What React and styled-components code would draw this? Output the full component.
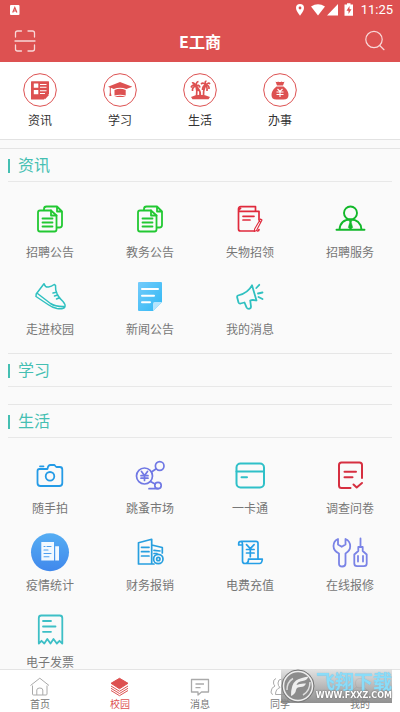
// App.jsx
import { useState } from 'react';
import styled, { createGlobalStyle } from 'styled-components';

const GlobalStyle = createGlobalStyle`
  * {
    box-sizing: border-box;
  }
  body {
    margin: 0;
    background: #fafafa;
    font-family: Roboto, 'Noto Sans CJK SC', sans-serif;
  }
`;

const RED = '#dd5151';

const Screen = styled.div`
  position: relative;
  display: flex;
  flex-direction: column;
  height: 100vh;
`;

const Header = styled.header`
  flex: none;
  background: ${RED};
  color: #fff;
`;

const StatusBar = styled.div`
  display: flex;
  align-items: center;
  height: 20px;
  padding: 0 7px 0 10px;
`;

const StatusIcons = styled.div`
  display: flex;
  align-items: center;
  gap: 3px;
  margin-left: auto;
`;

const Clock = styled.time`
  margin-left: 4px;
  font-size: 13px;
  font-weight: 400;
  line-height: 20px;
`;

const TitleBar = styled.div`
  display: flex;
  align-items: center;
  justify-content: space-between;
  height: 42px;
  padding: 0 14px;
`;

const PageTitle = styled.h1`
  margin: 0;
  font-family: 'Noto Sans CJK SC', sans-serif;
  font-size: 16px;
  font-weight: 700;
  line-height: 24px;
`;

const IconButton = styled.button`
  display: flex;
  padding: 0;
  border: 0;
  background: none;
  color: #f8d8d8;
  cursor: pointer;
`;

const Categories = styled.nav`
  display: grid;
  flex: none;
  grid-template-columns: repeat(5, 1fr);
  padding: 11px 0 8px;
  border-bottom: 1px solid #e2e2e2;
  background: #fff;
`;

const Category = styled.a`
  display: flex;
  flex-direction: column;
  align-items: center;
  gap: 4px;
  color: #333;
  font-size: 12px;
  line-height: 20px;
  text-decoration: none;
`;

const Content = styled.main`
  flex: 1;
  min-height: 0;
  margin-top: 8px;
  overflow-y: auto;
  scrollbar-width: none;
  border-top: 1px solid #e4e4e4;
  background: #fafafa;
`;

const Section = styled.section`
  margin: 0 8px;

  & + & {
    border-top: 1px solid #e6e6e6;
  }
`;

const SectionTitle = styled.h2`
  display: flex;
  align-items: center;
  gap: 8px;
  height: 33px;
  margin: 0;
  padding-top: 2px;
  border-bottom: 1px solid #e8e8e8;
  color: #45bfb2;
  font-size: 16px;
  font-weight: 400;
  line-height: 24px;

  &::before {
    content: '';
    width: 2px;
    height: 14px;
    background: #45bfb2;
  }
`;

const Grid = styled.div`
  display: grid;
  grid-template-columns: repeat(4, 1fr);
  margin: 0 -8px;
  padding-top: 17px;
`;

const Item = styled.a`
  display: flex;
  flex-direction: column;
  align-items: center;
  gap: 2px;
  padding-bottom: 13px;
  color: #777;
  font-size: 12px;
  line-height: 20px;
  text-decoration: none;
`;

const LineIcon = styled.svg.attrs({ width: 42, height: 42, viewBox: '0 0 42 42', 'aria-hidden': true })`
  fill: none;
  stroke: ${(props) => props.$color};
  stroke-width: ${(props) => props.$weight || 1.8};
  stroke-linecap: round;
  stroke-linejoin: round;
`;

const BadgeIcon = styled.svg.attrs({ width: 34, height: 34, viewBox: '0 0 34 34', 'aria-hidden': true })`
  fill: ${RED};
`;

const TabBar = styled.nav`
  display: grid;
  flex: none;
  grid-template-columns: repeat(5, 1fr);
  padding: 7px 0 1px;
  border-top: 1px solid #e4e4e4;
  background: #fff;
`;

const Tab = styled.a`
  display: flex;
  flex-direction: column;
  align-items: center;
  gap: 1px;
  color: ${(props) => (props.$active ? RED : '#777')};
  font-size: 10px;
  line-height: 13px;
  text-decoration: none;
`;

const TabIcon = styled.svg.attrs({ width: 20, height: 20, viewBox: '0 0 20 20', 'aria-hidden': true })`
  fill: none;
  stroke: ${(props) => (props.$active ? RED : '#aaa')};
  stroke-width: 1;
  stroke-linejoin: round;
`;

const Watermark = styled.div`
  position: absolute;
  right: 8px;
  bottom: 9px;
  display: flex;
  align-items: center;
  height: 34px;
  background: linear-gradient(rgba(222, 222, 222, 0.85), rgba(125, 125, 125, 0.85));
  pointer-events: none;
`;

const WatermarkText = styled.div`
  display: flex;
  flex-direction: column;
  align-items: center;
  padding-bottom: 2px;
`;

const WatermarkName = styled.span`
  color: #8adcf8;
  font-family: 'Noto Sans CJK SC', sans-serif;
  font-size: 19px;
  font-weight: 700;
  line-height: 22px;
  text-shadow: 0 0 1px #6db4d6;
`;

const WatermarkSite = styled.span`
  color: #fff;
  font-family: 'DejaVu Sans', sans-serif;
  font-size: 8px;
  font-weight: 700;
  line-height: 8px;
  text-shadow: 0 0 2px #555;
`;

const CopyIcon = () => (
  <LineIcon $color="#22c832">
    <path d="M11 11.500h11l5.500 5V30.500q0 2-2 2H11q-2 0-2-2v-17q0-2 2-2z" />
    <path d="M22 11.500v5h5.500M15 11V10q0-2.500 2.500-2.500H28l5 5V26q0 2.500-2.500 2.500H28M28 7.500v5h5" />
    <path d="M13.500 19.500h10M13.500 23.500h10M13.500 27.500h10" />
  </LineIcon>
);

const NotebookIcon = () => (
  <LineIcon $color="#e02a3c" $weight="1.7">
    <path d="M25 32H11.500q-2 0-2-2V10q0-2.300 2.300-2.300H26.500v4.300M9.500 12.300H30V21M9.500 12q0-1.500 2-2.500" />
    <path d="M14 17.300h11M14 21h7M30 30.500q0 1.500-1.500 1.500" />
    <path d="M31.500 20l1.500 1-5.500 10.500-2.200 1 .3-2.500zM30.300 22.300l1.500 1" strokeWidth="1.100" />
  </LineIcon>
);

const PersonIcon = () => (
  <LineIcon $color="#12b82a" $weight="1.900">
    <circle cx="21.500" cy="14" r="6.500" />
    <path d="M10.500 30.500q1-10 11-10t11 10M7.500 30.800h28" />
    <path d="M20.300 21.500h2.500l-.5 2 1.400 5-2.200 2-2.200-2 1.400-5z" fill="#12b82a" strokeWidth=".5" />
  </LineIcon>
);

const ShoeIcon = () => (
  <LineIcon $color="#2fc0c0" $weight="1.500">
    <path d="M7.200 18L15 7.700q1.500 4 4.500 3.300 3-.3 5.700-2.500l1.300.8q-.5 5 2 9.700 2 3.200 5.500 6.500 2.800 3 1.800 5.500-1.500 2.500-7.800 1.500-5-1-9-4L7 20.500z" />
    <path d="M8.500 17.500l13 10q5 3.300 14 3M24 17l3.500-.8M25.500 20l3.200-1M27.500 23l3-1.300" />
  </LineIcon>
);

const NewsIcon = () => (
  <LineIcon $color="#fff" $weight="2">
    <defs>
      <linearGradient id="newsFill" x1="0" y1="0" x2="1" y2="1">
        <stop offset="0" stopColor="#74cbfb" />
        <stop offset="1" stopColor="#2fb8f4" />
      </linearGradient>
    </defs>
    <path d="M10 6h22q1 0 1 1v19l-9 9H10q-1 0-1-1V7q0-1 1-1z" fill="url(#newsFill)" stroke="none" />
    <path d="M24 35v-7.500q0-1.500 1.500-1.500H33z" fill="#b5e5fd" stroke="none" />
    <path d="M13 13h16M13 19.700h12M13 26.300h8" />
  </LineIcon>
);

const MegaphoneIcon = () => (
  <LineIcon $color="#2fc0c0">
    <path d="M9 19.500q10-2.500 14-10.200l4.500 15.200q-4-1-6.300 0l.8 6q0 2-2 2.300-1.700 0-2.500-1.500l-2-4.800-4 1q-1.500.2-2-1L8.200 21.500q-.4-1.500.8-2z" />
    <path d="M27.300 12l3-3.200M29 17.500l4.500-1M29.500 21l4 2" />
  </LineIcon>
);

const CameraIcon = () => (
  <LineIcon $color="#259be6">
    <path d="M10.500 14h8q.5-4 3-4h4q1.500 2 2 2h3.300q2.500 0 2.500 2.500V28q0 3-3 3H11.500q-3 0-3-3V16q0-2 2-2zM11 11.300h3.500" />
    <circle cx="21" cy="21.300" r="4.300" />
  </LineIcon>
);

const FleaMarketIcon = () => (
  <LineIcon $color="#7078e4" $weight="1.700">
    <circle cx="15.500" cy="21" r="8" />
    <circle cx="30.700" cy="11" r="4.300" />
    <circle cx="29" cy="30.500" r="3.200" />
    <path d="M22.500 17l4.700-3.300M21.500 26.500l4.500 2.500M20 33.700h9M12.500 16.500l3 4 3-4M15.500 20.500v5M12 20.700h7M12 23.200h7" />
  </LineIcon>
);

const CardIcon = () => (
  <LineIcon $color="#2fc0c8" $weight="2">
    <rect x="7.500" y="8.500" width="27.500" height="24" rx="4" />
    <path d="M7.500 16.500H35M12.500 22.300h5.500" />
  </LineIcon>
);

const SurveyIcon = () => (
  <LineIcon $color="#d62f40" $weight="2">
    <path d="M21.500 33H12.500q-2.500 0-2.500-2.500V10q0-2.500 2.500-2.500h18q2.500 0 2.500 2.500v13" />
    <path d="M15.500 16.700H27M15.500 22.300h8M24.500 29.500l3.200 3L33 28" />
  </LineIcon>
);

const StatsIcon = () => (
  <LineIcon $color="#4d9ff0" $weight="1.100">
    <defs>
      <linearGradient id="statsFill" x1="0" y1="0" x2="0" y2="1">
        <stop offset="0" stopColor="#55adf3" />
        <stop offset="1" stopColor="#4088ec" />
      </linearGradient>
    </defs>
    <circle cx="21" cy="20.300" r="19" fill="url(#statsFill)" stroke="none" />
    <path d="M12.300 10H25v18.500H12.300zM26.200 14.300h3.800v14.200h-3.800z" fill="#f2f9ff" stroke="none" />
    <path d="M15 14.500h1M18 14.500h4M15 18h4M15 21.500h7M15 24.800h5" />
  </LineIcon>
);

const FinanceIcon = () => (
  <LineIcon $color="#279fdf" $weight="1.700">
    <path d="M25 32H9.500V10.800l13.200-3.500V32M22.700 13l10.600 2.500v5.500M12.500 15.300h7.500M12.500 19.700h7.500M12.500 24h7.500M25 18.300l6 .7M25 21.500h3" />
    <circle cx="29.300" cy="27" r="4.700" />
    <circle cx="29.300" cy="27" r="1.700" />
  </LineIcon>
);

const BillIcon = () => (
  <LineIcon $color="#259fe6" $weight="1.700">
    <path d="M13.500 13H9.700v-1.500q0-2.200 2.300-2.200h15q2 0 2 2v15.500M12 9.300q1.500.5 1.500 3V29q0 2.500 2.500 2.500h14.500q2.500 0 2.800-4.300H19.500q0 4.300-3.500 4.300" />
    <path d="M17.500 12.700l3.800 4 3.800-4M21.300 16.700v8M17.500 17.500h7.600M17.500 21h7.600" />
  </LineIcon>
);

const ToolsIcon = () => (
  <LineIcon $color="#7a83e6">
    <path d="M9 7v5.500l3.700 2.300 3.800-2.300V7q4.700 2 4.700 7.300 0 4.500-4.700 7.200v10q0 3-3.300 3t-3.200-3v-10q-5.500-2.700-5.500-7.500Q4.500 9 9 7z" />
    <path d="M31.500 6.500v8.500M29.300 15h4.400v4l4 3.500v9q0 2.700-2.700 2.700h-7q-2.700 0-2.700-2.700v-9l4-3.500zM29 24v5.500M34 24v5.500" />
  </LineIcon>
);

const InvoiceIcon = () => (
  <LineIcon $color="#3dbfc6">
    <path d="M9.800 34.500V9q0-2.500 2.500-2.500h18.500q2.500 0 2.500 2.500v25.500l-2.800-2.700-2.700 2.700-3.300-4.500-3 4.500-3.200-4.500-3 4.500-2.800-2.700z" />
    <path d="M14 12h8M14 17.500h12.500M14 22.800h8" />
  </LineIcon>
);

const Ring = () => <circle cx="17" cy="17" r="16.300" fill="none" stroke={RED} strokeWidth="1" />;

const categories = [
  {
    label: '资讯',
    icon: (
      <BadgeIcon>
        <Ring />
        <path d="M8.500 8.300h17q.5 0 .5.500V21l-5 5.500H8.500q-.5 0-.5-.5V8.800q0-.5.500-.5z" />
        <path d="M10.800 10.500h4.500v4.300h-4.500zM10.800 17h4.500v4.300h-4.500zM17 11h6.500v1H17zM17 13.700h6.500v1H17zM17 17.300h6.500v1H17zM17 20h5v1h-5z" fill="#fff" />
        <path d="M22 26.300v-4.300h4z" />
      </BadgeIcon>
    ),
  },
  {
    label: '学习',
    icon: (
      <BadgeIcon>
        <Ring />
        <path d="M5 13.700L17 9l12.300 4.700-6 2.300q-6.300-2.500-12.500 0l-3 -1.200v4.700l.7 3.500H6.300l.5-3.500v-5zM11.500 17q5.500-2.300 11.200 0v5.500q-5.500-1.500-11.200 0z" />
        <path d="M11.500 23.500q5.500-1.500 11.200 0-5.500 1-11.200 0z" />
      </BadgeIcon>
    ),
  },
  {
    label: '生活',
    icon: (
      <BadgeIcon>
        <Ring />
        <path d="M8 24q9-4.500 19 0l-1.500 2.300h-16z" />
        <path
          d="M13.500 24q1-6-.500-11M20.500 23q-.5-5 2-11M17 23q1-4-1.500-7M13 13q-3-2.500-5 1.500M13 13q-2-4-4-3M13 13q0-4 2.500-4.500M13 13q3-2 4 1.500M13 13q-4 1-3.500 5M22.500 12q-2-3-4.500-1M22.500 12q-1-4 1-4M22.500 12q3-3 4.500-1M22.500 12q4 0 3.500 4M22.500 12q-3 1-3 5M22.500 12q2 2 1.500 6M13 13q3 2 2 5"
          fill="none"
          stroke={RED}
          strokeWidth="1.700"
        />
      </BadgeIcon>
    ),
  },
  {
    label: '办事',
    icon: (
      <BadgeIcon>
        <Ring />
        <path d="M12.500 8.500q1.500 1 2.500 0 2 1 3.500 0 1.500 1 3 0l-1.500 4h-6zM13.500 13.500h7q5 4 5 8.500 0 4.500-5 4.500h-7q-5 0-5-4.500 0-4.500 5-8.500z" />
        <path d="M14.500 16l2.500 2.500 2.500-2.500M17 18.500V24M13.500 19h7M13.500 21.500h7" fill="none" stroke="#fff" strokeWidth="1.100" />
      </BadgeIcon>
    ),
  },
];

const sections = [
  {
    title: '资讯',
    items: [
      { label: '招聘公告', Icon: CopyIcon },
      { label: '教务公告', Icon: CopyIcon },
      { label: '失物招领', Icon: NotebookIcon },
      { label: '招聘服务', Icon: PersonIcon },
      { label: '走进校园', Icon: ShoeIcon },
      { label: '新闻公告', Icon: NewsIcon },
      { label: '我的消息', Icon: MegaphoneIcon },
    ],
  },
  { title: '学习', items: [] },
  {
    title: '生活',
    items: [
      { label: '随手拍', Icon: CameraIcon },
      { label: '跳蚤市场', Icon: FleaMarketIcon },
      { label: '一卡通', Icon: CardIcon },
      { label: '调查问卷', Icon: SurveyIcon },
      { label: '疫情统计', Icon: StatsIcon },
      { label: '财务报销', Icon: FinanceIcon },
      { label: '电费充值', Icon: BillIcon },
      { label: '在线报修', Icon: ToolsIcon },
      { label: '电子发票', Icon: InvoiceIcon },
    ],
  },
];

const tabs = [
  { label: '首页', drawing: <path d="M2.500 8.500V17q0 1 1 1h12.500q1 0 1-1V8.500M.5 8.500L9.800 1.200l9.200 7.300M6.800 18v-5q0-2 3-2t3 2v5" /> },
  {
    label: '校园',
    drawing: (
      <>
        <path d="M9.500 1.300l8.500 5-8.500 5.500L1 6.300z" fill={RED} />
        <path d="M1 9l8.500 5.300L18 9M1 11.300l8.500 5.200 8.500-5.200M1 13.500l8.500 5.200 8.500-5.200" />
      </>
    ),
  },
  { label: '消息', drawing: <path d="M1.500 2.500h17v12.500h-7l-3.500 3v-3H1.500zM5.500 7H14M5.500 10.700h5" strokeWidth="1.300" /> },
  {
    label: '同学',
    drawing: <path d="M6 1.500q-3 1-2.500 4.500.3 2 1.500 3-4 1.500-4 6 0 2 2 2.500M12 2q4 0 4 4 0 3-2 4.500 5 1.500 5 7H5.500q0-5.500 4.500-7-2-1.500-2-4.500 0-4 4-4z" />,
  },
  {
    label: '我的',
    drawing: <path d="M10 1.500q4.500 0 4.500 4.700T10 11Q5.500 11 5.500 6.200T10 1.500zM1.500 18.500q0-6 5.500-8.500M18.500 18.500q0-6-5.500-8.500M1.500 18.500h17" />,
  },
];

const App = () => {
  const [activeTab, setActiveTab] = useState('校园');

  return (
    <Screen>
      <GlobalStyle />
      <Header>
        <StatusBar>
          <svg width="10" height="20" viewBox="0 0 10 20" aria-hidden="true">
            <rect x="0" y="5" width="9.500" height="10" rx="1" fill="#fff" />
            <path d="M2.700 12.500L4.800 7.500l2.100 5M3.500 11h2.600" fill="none" stroke={RED} strokeWidth="1.200" />
          </svg>
          <StatusIcons>
            <svg width="58" height="20" viewBox="0 0 58 20" fill="#fff" aria-hidden="true">
              <path d="M4 4q4 0 4 4 0 2.500-4 7.700Q0 10.500 0 8q0-4 4-4z" />
              <circle cx="4" cy="8" r="1.400" fill={RED} />
              <path d="M15 6.500q7-4.500 14 0l-7 9zM42 4v11.500H31z" />
              <path d="M51 4.500V3.300h3.500v1.200H57v11.200h-8.500V4.500z" />
              <path d="M53.500 6l-3 4.700h2v3.300l3-4.800h-2z" fill={RED} />
            </svg>
            <Clock>11:25</Clock>
          </StatusIcons>
        </StatusBar>
        <TitleBar>
          <IconButton type="button" aria-label="扫一扫">
            <svg width="22" height="24" viewBox="0 0 22 24" fill="none" stroke="currentColor" strokeWidth="1.300" strokeLinecap="round">
              <path d="M1.500 8V4q0-2 2-2H7.500M14 2h4.500q2 0 2 2v4M1.500 16v4q0 2 2 2H7.500M14 22h4.500q2 0 2-2v-4M1 12h20" />
            </svg>
          </IconButton>
          <PageTitle>E工商</PageTitle>
          <IconButton type="button" aria-label="搜索">
            <svg width="22" height="24" viewBox="0 0 22 24" fill="none" stroke="currentColor" strokeWidth="1.200" strokeLinecap="round">
              <circle cx="10" cy="10.500" r="8.200" />
              <path d="M15.700 16.500l4.300 4.200" />
            </svg>
          </IconButton>
        </TitleBar>
      </Header>

      <Categories>
        {categories.map(({ label, icon }) => (
          <Category key={label} href="#">
            {icon}
            {label}
          </Category>
        ))}
      </Categories>

      <Content>
        {sections.map(({ title, items }) => (
          <Section key={title}>
            <SectionTitle>{title}</SectionTitle>
            <Grid>
              {items.map(({ label, Icon }) => (
                <Item key={label} href="#">
                  <Icon />
                  {label}
                </Item>
              ))}
            </Grid>
          </Section>
        ))}
      </Content>

      <TabBar>
        {tabs.map(({ label, drawing }) => (
          <Tab key={label} href="#" $active={label === activeTab} onClick={() => setActiveTab(label)}>
            <TabIcon $active={label === activeTab}>{drawing}</TabIcon>
            {label}
          </Tab>
        ))}
      </TabBar>

      <Watermark>
        <svg width="35" height="34" viewBox="0 0 35 34" fill="none" aria-hidden="true">
          <circle cx="17" cy="17" r="16" fill="#8c8c8c" stroke="#777" strokeWidth="1" />
          <circle cx="17" cy="17" r="14.500" stroke="#eee" strokeWidth="1.500" />
          <path d="M10 27q0-12 5-15.500Q19 9 27.500 7.500q-1.500 4-6 4.500-5 .5-6 4 4-2 9.500-1.500-1.500 3.500-5.500 3.500-4 0-4.500 3-.5 4-5 6z" fill="#eee" />
          <path d="M6 21q0-8 6-11.500M29 13q0 9-7 13" stroke="#ddd" strokeWidth="1.500" />
        </svg>
        <WatermarkText>
          <WatermarkName>飞翔下载</WatermarkName>
          <WatermarkSite>WWW.FXXZ.COM</WatermarkSite>
        </WatermarkText>
      </Watermark>
    </Screen>
  );
};

export default App;
